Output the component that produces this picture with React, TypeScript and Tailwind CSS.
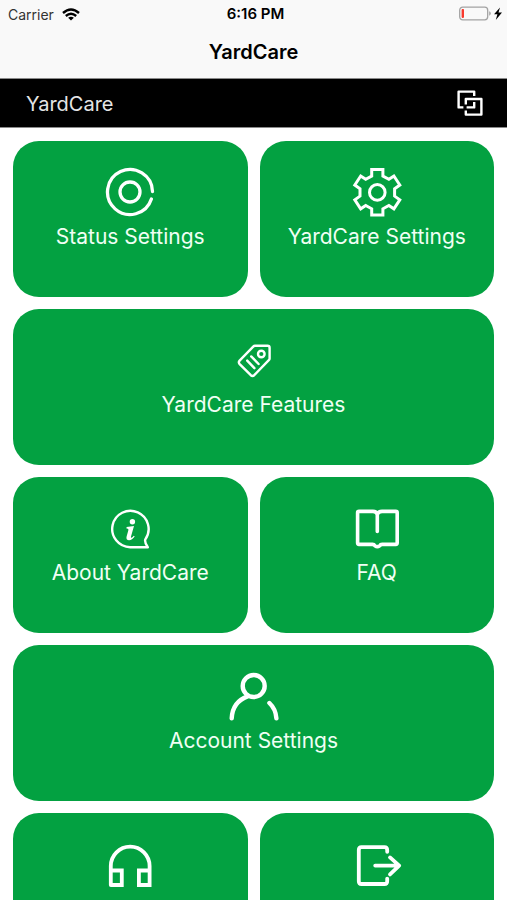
import type { ReactNode } from "react";

const Icon = ({ children, width = 2.8 }: { children: ReactNode; width?: number }) => (
    <svg
        viewBox="0 0 50 50"
        className="size-[50px] text-white"
        fill="none"
        stroke="currentColor"
        strokeWidth={width}
        strokeLinecap="round"
        strokeLinejoin="round"
        aria-hidden="true"
    >
        {children}
    </svg>
)

const StatusIcon = () => (
    <Icon width={3.3}>
        <path d="M47.5 24.5A22.5 22.5 0 1 0 46.4 32" />
        <circle cx="25" cy="25" r="10" />
    </Icon>
)

const GearIcon = () => (
    <Icon width={3}>
        <path
            strokeLinejoin="miter"
            d="M19.7 2.6h11.2v6.4l6 3.3 5-3.3 5.9 9-5.2 3.7v7.4l5.2 3.7-5.9 9-5-3.3-6 3.3v6.2H19.7V41.8l-6-3.3-5 3.3-5.9-9L8 29.1v-7.4l-5.2-3.7 5.9-9 5 3.3 6-3.3z"
        />
        <circle cx="25.3" cy="25.4" r="7.8" />
    </Icon>
)

const TagIcon = () => (
    <Icon width={2.4}>
        <path d="M26 10.8H38.6Q40.6 10.8 40.6 12.8V23.4Q40.6 24.4 39.8 25.2L25.2 40.2Q23.5 41.6 21.8 40.2L10.4 28.8Q9.2 27.2 10.6 25.6L24.2 11.6Q25 10.8 26 10.8z" />
        <circle cx="32.3" cy="19" r="3.3" />
        <path d="m18.2 25.6 7.2 7.6M22.2 21.4l7.4 7.6" />
    </Icon>
)

const InfoIcon = () => (
    <Icon width={2.4}>
        <path d="M25.2 44.2a18.2 18.2 0 1 1 15-7.6q-.6 3.4 2.6 7.6z" />
        <g fill="currentColor" stroke="none">
            <circle cx="27.4" cy="18.8" r="2.7" />
            <path d="m21.6 24 7.4-.9-3 10.3q-.4 1.6.6 1.3 1-.4 2.2-1.9l.9.8q-2.6 3.6-5.6 3.6-3.4 0-2.5-3.6l1.7-6q.4-1.6-.5-1.8l-1.3-.3z" />
        </g>
    </Icon>
)

const BookIcon = () => (
    <Icon width={3.6}>
        <path d="M25.3 11.5Q24.3 8.4 21 8.4H7Q5.6 8.4 5.6 9.8v30q0 1.6 1.4 1.6h13.5q1.7 0 2.5 1.4 2.3 1.8 4.6 0 .8-1.4 2.5-1.4h13.7q1.4 0 1.4-1.6v-30q0-1.4-1.4-1.4H30Q26.4 8.4 25.3 11.5V28.5" />
    </Icon>
)

const PersonIcon = () => (
    <Icon width={4.4}>
        <circle cx="24.7" cy="15" r="11" />
        <path d="M18.5 25.4Q3.5 31 2.7 47.4M40.4 32q6.4 6 7 15.4" />
    </Icon>
)

const HeadphonesIcon = () => (
    <Icon width={3.8}>
        <path strokeLinejoin="miter" d="M5.8 46V27a19.4 19.4 0 0 1 38.8 0v19H33.9V31.5h10.7M5.8 46h11V31.5h-11" />
    </Icon>
)

const LogoutIcon = () => (
    <Icon width={3.8}>
        <path d="M35.2 12.8V11q0-2.8-2.8-2.8H9.5Q6.8 8.2 6.8 11v31.2q0 2.8 2.7 2.8h22.9q2.8 0 2.8-2.8v-2.6" />
        <path d="M23.2 26.6h24M38 18.4l9.2 8.2L38 35.4" />
    </Icon>
)

const WifiIcon = () => (
    <svg viewBox="0 0 18 13" className="h-[13px] w-[18px]" fill="none" stroke="currentColor" strokeWidth="2.4" aria-hidden="true">
        <path d="M1 5q8-7 16 0M3.8 8q5.2-4.4 10.4 0" />
        <path d="M9 12.6 6.1 9.8q2.9-2.3 5.8 0z" fill="currentColor" stroke="none" />
    </svg>
)

const BatteryIcon = () => (
    <svg viewBox="0 0 44 16" className="h-4 w-11" aria-hidden="true">
        <rect x="0.7" y="1.2" width="28" height="12.6" rx="3" fill="none" stroke="#a3a3a3" strokeWidth="1.3" />
        <path d="M30.2 5.3q1.6.6 1.6 2.2t-1.6 2.2z" fill="#a3a3a3" />
        <rect x="2.6" y="3.1" width="2.4" height="8.8" rx="0.8" fill="#f8392d" />
        <path d="M41 1.5 35 8.2h3.4L36.8 14 43 6.6h-3.5z" fill="black" />
    </svg>
)

const CopyIcon = () => (
    <svg viewBox="0 0 26 26" className="size-[26px]" fill="none" stroke="currentColor" strokeWidth="2.4" strokeLinejoin="round" aria-hidden="true">
        <path d="M17.2 6V1.6H1.6v15.8h4.8M9.6 17.4h7.6V12" />
        <path d="M8.8 14.5V9h15.6v15.6H8.8v-4.2" />
    </svg>
)

const tiles = [
    { name: "Status Settings", label: "Status Settings", icon: <StatusIcon />, wide: false },
    { name: "YardCare Settings", label: "YardCare Settings", icon: <GearIcon />, wide: false },
    { name: "YardCare Features", label: "YardCare Features", icon: <TagIcon />, wide: true },
    { name: "About YardCare", label: "About YardCare", icon: <InfoIcon />, wide: false },
    { name: "FAQ", label: "FAQ", icon: <BookIcon />, wide: false },
    { name: "Account Settings", label: "Account Settings", icon: <PersonIcon />, wide: true },
    { name: "Support", label: "", icon: <HeadphonesIcon />, wide: false },
    { name: "Logout", label: "", icon: <LogoutIcon />, wide: false },
]

const App = () => {
    return (
        <div className="h-screen overflow-hidden bg-white font-['Inter','Liberation_Sans',sans-serif]">
            <header className="border-b border-[#8a8a8a] bg-[#f9f9f9] text-black">
                <div className="grid h-7 grid-cols-3 items-center pl-2 pr-1 text-[14px]">
                    <div className="flex items-center gap-2 text-[#333]">
                        Carrier
                        <span className="text-black"><WifiIcon /></span>
                    </div>
                    <div className="text-center text-[15px] font-semibold">6:16 PM</div>
                    <div className="flex justify-end"><BatteryIcon /></div>
                </div>
                <h1 className="h-[50px] text-center text-[20px] font-semibold leading-[48px]">YardCare</h1>
            </header>
            <div className="flex h-[49px] items-center justify-between border-b border-[#8a8a8a] bg-black pl-[26px] pr-6 text-white">
                <h2 className="pt-px text-[20px] text-[#e5e5e5]">YardCare</h2>
                <button type="button" aria-label="Copy"><CopyIcon /></button>
            </div>
            <main className="grid grid-cols-2 gap-3 p-[13px]">
                {tiles.map((tile) =>
                    <button
                        key={tile.name}
                        type="button"
                        aria-label={tile.name}
                        className={`flex h-[156px] cursor-pointer flex-col items-center rounded-[26px] bg-[#03a141] pt-[26px] text-[21px] leading-10 text-[#f0fff4] ${tile.wide ? "col-span-2" : ""}`}
                    >
                        {tile.icon}
                        {tile.label}
                    </button>
                )}
            </main>
        </div>
    )
}

export default App;
